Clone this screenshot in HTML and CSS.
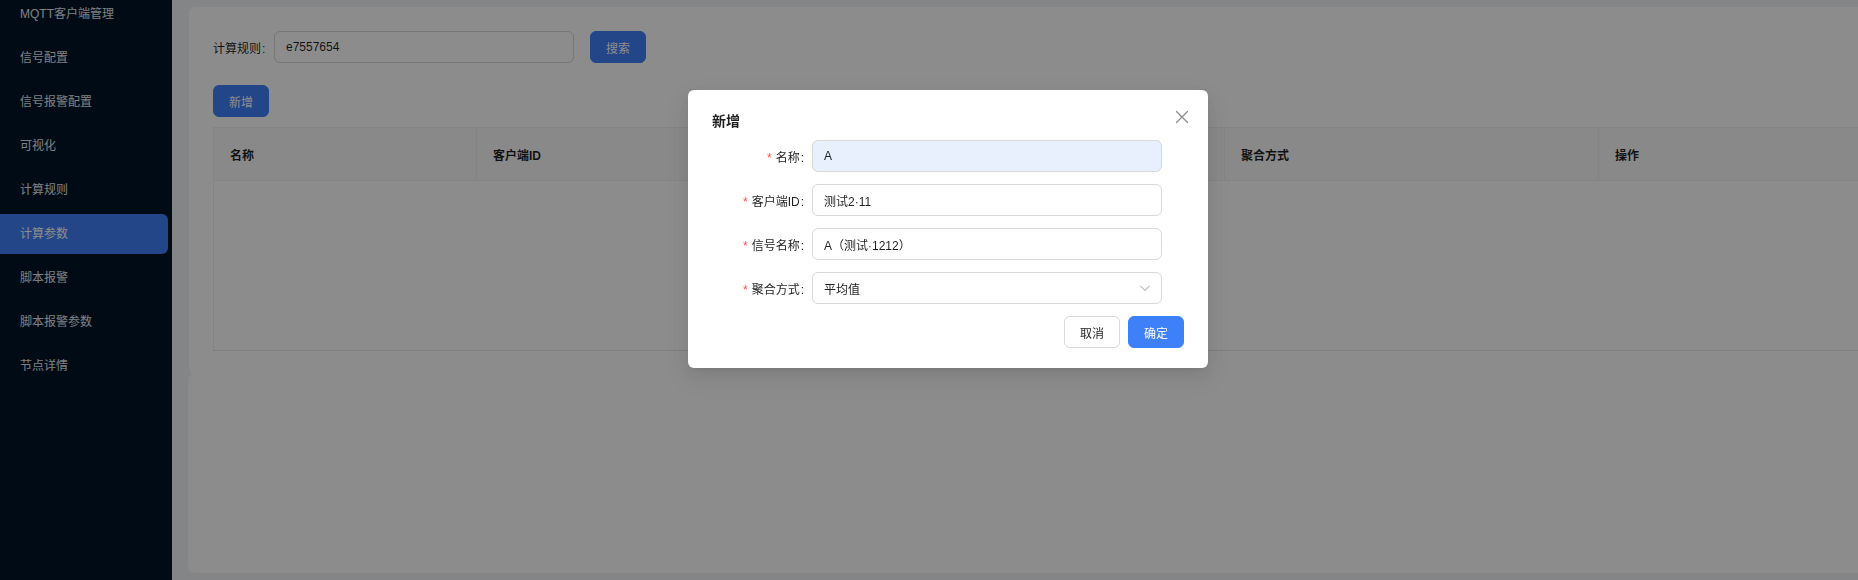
FILE: index.html
```html
<!DOCTYPE html>
<html lang="zh-CN">
<head>
<meta charset="utf-8">
<title>计算参数</title>
<link rel="stylesheet" href="styles.css">
</head>
<body>
<div class="app">
  <aside class="sider">
    <ul class="menu">
      <li class="menu-item">MQTT客户端管理</li>
      <li class="menu-item">信号配置</li>
      <li class="menu-item">信号报警配置</li>
      <li class="menu-item">可视化</li>
      <li class="menu-item">计算规则</li>
      <li class="menu-item active">计算参数</li>
      <li class="menu-item">脚本报警</li>
      <li class="menu-item">脚本报警参数</li>
      <li class="menu-item">节点详情</li>
    </ul>
  </aside>
  <main class="main">
    <section class="card card-top">
      <div class="search-bar">
        <label class="search-label">计算规则<span class="colon">:</span></label>
        <div class="input search-input">e7557654</div>
        <button class="btn btn-primary search-btn">搜索</button>
      </div>
      <div class="toolbar">
        <button class="btn btn-primary">新增</button>
      </div>
      <table class="table">
        <colgroup>
          <col class="c1"><col class="c2"><col class="c3"><col class="c4"><col class="c5">
        </colgroup>
        <thead>
          <tr>
            <th>名称</th>
            <th>客户端ID</th>
            <th>信号名称</th>
            <th>聚合方式</th>
            <th>操作</th>
          </tr>
        </thead>
        <tbody>
          <tr><td colspan="5" class="empty"></td></tr>
        </tbody>
      </table>
    </section>
    <section class="card card-bottom"></section>
  </main>
</div>

<div class="mask"></div>

<div class="modal">
  <button class="modal-close" aria-label="关闭">
    <svg width="14" height="14" viewBox="0 0 14 14"><path d="M1.5 1.5 L12.5 12.5 M12.5 1.5 L1.5 12.5" stroke="currentColor" stroke-width="1.3" fill="none" stroke-linecap="round"/></svg>
  </button>
  <div class="modal-title">新增</div>
  <div class="form">
    <div class="form-row">
      <div class="form-label"><span class="req">*</span>名称<span class="colon">:</span></div>
      <div class="input form-input autofill">A</div>
    </div>
    <div class="form-row">
      <div class="form-label"><span class="req">*</span>客户端ID<span class="colon">:</span></div>
      <div class="input form-input">测试2·11</div>
    </div>
    <div class="form-row">
      <div class="form-label"><span class="req">*</span>信号名称<span class="colon">:</span></div>
      <div class="input form-input">A（测试·1212）</div>
    </div>
    <div class="form-row">
      <div class="form-label"><span class="req">*</span>聚合方式<span class="colon">:</span></div>
      <div class="input form-input select">
        <span>平均值</span>
        <svg class="arrow" width="12" height="12" viewBox="0 0 12 12"><path d="M1.5 4 L6 8.5 L10.5 4" stroke="currentColor" stroke-width="1.1" fill="none"/></svg>
      </div>
    </div>
  </div>
  <div class="modal-footer">
    <button class="btn btn-default">取消</button>
    <button class="btn btn-primary">确定</button>
  </div>
</div>
</body>
</html>
```

FILE: styles.css
```css
* { box-sizing: border-box; }

html, body {
  margin: 0;
  padding: 0;
  width: 1858px;
  height: 580px;
  overflow: hidden;
  font-family: "Liberation Sans", "Noto Sans CJK SC", sans-serif;
  font-size: 12px;
  color: rgba(0, 0, 0, 0.88);
  background: #f0f2f5;
}

.app {
  display: flex;
  height: 580px;
}

/* Sidebar */
.sider {
  width: 172px;
  flex: none;
  background: #001529;
  overflow: hidden;
}

.menu {
  list-style: none;
  margin: -6px 0 0 0;
  padding: 0;
}

.menu-item {
  height: 40px;
  line-height: 40px;
  margin: 0 4px 4px 0;
  padding-left: 20px;
  color: #e6e8ec;
  border-radius: 0 6px 6px 0;
  white-space: nowrap;
}

.menu-item.active {
  background: #3e80f8;
  color: #fff;
}

/* Main */
.main {
  flex: 1;
  min-width: 0;
  padding: 7px 0 0 17px;
  overflow: hidden;
}

.card {
  background: #fff;
  border-radius: 6px;
  width: 1800px;
}

.card-top {
  height: 367px;
  padding: 24px;
}

.card-bottom {
  height: 199px;
  margin-left: -1px;
}

.search-bar {
  display: flex;
  align-items: center;
  height: 32px;
}

.search-label {
  width: 61px;
  flex: none;
  white-space: nowrap;
}

.colon {
  margin-left: 1px;
}

.input {
  height: 32px;
  border: 1px solid #d9d9d9;
  border-radius: 6px;
  background: #fff;
  padding: 0 11px;
  display: flex;
  align-items: center;
  color: rgba(0, 0, 0, 0.88);
  white-space: nowrap;
}

.search-input {
  width: 300px;
}

.btn {
  height: 32px;
  width: 56px;
  border-radius: 6px;
  font-family: inherit;
  font-size: 12px;
  padding: 0;
  cursor: pointer;
}

.btn-primary {
  background: #3e80f8;
  border: 1px solid #3e80f8;
  color: #fff;
}

.btn-default {
  background: #fff;
  border: 1px solid #d9d9d9;
  color: rgba(0, 0, 0, 0.88);
}

.search-btn {
  margin-left: 16px;
}

.toolbar {
  margin-top: 22px;
  height: 32px;
  display: flex;
}

/* Table */
.table {
  margin-top: 10px;
  border-collapse: collapse;
  table-layout: fixed;
  width: 1752px;
  border: 1px solid #f0f0f0;
}

.c1 { width: 263px; }
.c2 { width: 374px; }
.c3 { width: 374px; }
.c4 { width: 374px; }
.c5 { width: 367px; }

.table th {
  height: 53px;
  padding: 0 16px;
  text-align: left;
  font-weight: 600;
  background: #fafafa;
  border-bottom: 1px solid #f0f0f0;
  border-right: 1px solid #f0f0f0;
  color: rgba(0, 0, 0, 0.88);
}

.table td.empty {
  height: 170px;
  border-bottom: 1px solid #e6e6e6;
}

/* Mask */
.mask {
  position: fixed;
  inset: 0;
  background: rgba(0, 0, 0, 0.45);
}

/* Modal */
.modal {
  position: fixed;
  left: 688px;
  top: 90px;
  width: 520px;
  background: #fff;
  border-radius: 6px;
  padding: 20px 24px 20px;
  box-shadow: 0 6px 16px 0 rgba(0, 0, 0, 0.08), 0 3px 6px -4px rgba(0, 0, 0, 0.12), 0 9px 28px 8px rgba(0, 0, 0, 0.05);
}

.modal-close {
  position: absolute;
  top: 16px;
  right: 15px;
  width: 22px;
  height: 22px;
  padding: 0;
  border: 0;
  background: transparent;
  color: rgba(0, 0, 0, 0.45);
  display: flex;
  align-items: center;
  justify-content: center;
}

.modal-title {
  font-size: 14px;
  font-weight: 600;
  line-height: 22px;
  margin-bottom: 8px;
  color: rgba(0, 0, 0, 0.88);
}

.form {
  width: 450px;
}

.form-row {
  display: flex;
  align-items: center;
  height: 32px;
  margin-bottom: 12px;
}

.form-row:last-child {
  margin-bottom: 0;
}

.form-label {
  width: 100px;
  flex: none;
  text-align: right;
  padding-right: 8px;
  white-space: nowrap;
}

.req {
  color: #ff4d4f;
  margin-right: 4px;
  font-family: "Liberation Sans", sans-serif;
}

.form-input {
  width: 350px;
}

.autofill {
  background: #e8f0fe;
}

.select {
  justify-content: space-between;
}

.select .arrow {
  color: #c4c4c4;
  margin-right: -1px;
}

.modal-footer {
  margin-top: 12px;
  display: flex;
  justify-content: flex-end;
  gap: 8px;
}
```
